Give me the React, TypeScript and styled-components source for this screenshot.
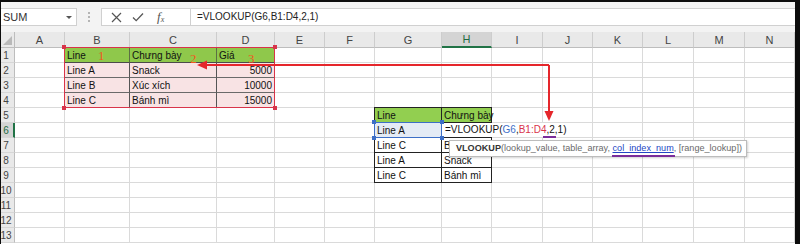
import React from 'react'
import styled, { createGlobalStyle, css } from 'styled-components'

type Kind = 'plain' | 'green1' | 'pink' | 'green2' | 'box2' | 'ref' | 'edit'

type CellDef = {
  text?: string
  kind: Kind
  right?: boolean
  mark?: { n: string; left: number; top: number }
}

const COLS = [
  { id: '', w: 14 },
  { id: 'A', w: 50 },
  { id: 'B', w: 65 },
  { id: 'C', w: 87 },
  { id: 'D', w: 58 },
  { id: 'E', w: 50 },
  { id: 'F', w: 50 },
  { id: 'G', w: 67 },
  { id: 'H', w: 50 },
  { id: 'I', w: 51 },
  { id: 'J', w: 50 },
  { id: 'K', w: 50 },
  { id: 'L', w: 51 },
  { id: 'M', w: 51 },
  { id: 'N', w: 50 },
]
const ROWS = 13
const ACTIVE_COL = 'H'
const ACTIVE_ROW = 6

const CELLS: Record<string, CellDef> = {
  B1: { text: 'Line', kind: 'green1', mark: { n: '1', left: 33, top: 1 } },
  C1: { text: 'Chưng bày', kind: 'green1', mark: { n: '2', left: 60, top: 4 } },
  D1: { text: 'Giá', kind: 'green1', mark: { n: '3', left: 31, top: 4 } },
  B2: { text: 'Line A', kind: 'pink' },
  C2: { text: 'Snack', kind: 'pink' },
  D2: { text: '5000', kind: 'pink', right: true },
  B3: { text: 'Line B', kind: 'pink' },
  C3: { text: 'Xúc xích', kind: 'pink' },
  D3: { text: '10000', kind: 'pink', right: true },
  B4: { text: 'Line C', kind: 'pink' },
  C4: { text: 'Bánh mì', kind: 'pink' },
  D4: { text: '15000', kind: 'pink', right: true },
  G5: { text: 'Line', kind: 'green2' },
  H5: { text: 'Chưng bày', kind: 'green2' },
  G6: { text: 'Line A', kind: 'ref' },
  H6: { kind: 'edit' },
  G7: { text: 'Line C', kind: 'box2' },
  H7: { text: 'B', kind: 'box2' },
  G8: { text: 'Line A', kind: 'box2' },
  H8: { text: 'Snack', kind: 'box2' },
  G9: { text: 'Line C', kind: 'box2' },
  H9: { text: 'Bánh mì', kind: 'box2' },
}

const GlobalStyle = createGlobalStyle`
  html, body { margin: 0; padding: 0; background: #000; }
  body { font-family: "Liberation Sans", Arial, sans-serif; }
`

const Frame = styled.div`
  width: 800px;
  height: 244px;
  box-sizing: border-box;
  padding: 2px 5px 0 1px;
  background: #0c0c0c;
  overflow: hidden;
  display: flex;
  flex-direction: column;
`

const FormulaBar = styled.div`
  height: 30px;
  flex: none;
  background: #f3f3f3;
  display: flex;
  align-items: center;
`

const NameBox = styled.div`
  width: 76px;
  height: 18px;
  box-sizing: border-box;
  background: #fff;
  border: 1px solid #d0d0d0;
  border-left: none;
  display: flex;
  align-items: center;
  justify-content: space-between;
  padding: 0 4px 0 2px;
  font-size: 11px;
  color: #333;
`

const Caret = styled.span`
  width: 0;
  height: 0;
  border-left: 3px solid transparent;
  border-right: 3px solid transparent;
  border-top: 3px solid #555;
`

const Grip = styled.div`
  width: 24px;
  display: flex;
  flex-direction: column;
  align-items: center;
  gap: 2px;
  & > i {
    width: 2px;
    height: 2px;
    background: #b5b5b5;
  }
`

const Tools = styled.div`
  width: 89px;
  height: 18px;
  box-sizing: border-box;
  background: #fff;
  border: 1px solid #d0d0d0;
  border-right: none;
  display: flex;
  align-items: center;
  padding-left: 9px;
  gap: 10px;
`

const Fx = styled.span`
  font-family: "Liberation Serif", serif;
  font-style: italic;
  font-size: 13px;
  color: #555;
  margin-left: 3px;
  & > sub {
    font-size: 8px;
    vertical-align: -1px;
  }
`

const Input = styled.div`
  flex: 1;
  height: 18px;
  box-sizing: border-box;
  background: #fff;
  border: 1px solid #d0d0d0;
  border-right: none;
  padding-left: 6px;
  font-size: 10px;
  line-height: 16px;
  color: #222;
`

const SheetWrap = styled.div`
  position: relative;
  flex: 1;
  background: #fff;
`

const Sheet = styled.div`
  display: grid;
  grid-template-columns: ${COLS.map((c) => c.w + 'px').join(' ')};
  grid-template-rows: 16px repeat(${ROWS}, 15px);
`

const headBase = css`
  box-sizing: border-box;
  background: #e9e9e9;
  color: #444;
  font-size: 11px;
  display: flex;
  align-items: center;
  justify-content: center;
  overflow: hidden;
`

const ColHead = styled.div<{ $active?: boolean }>`
  ${headBase}
  border-right: 1px solid #cdcdcd;
  border-bottom: 1px solid #bdbdbd;
  ${(p) =>
    p.$active &&
    css`
      background: #d4d4d4;
      color: #1f6b42;
      border-bottom: 2px solid #217346;
    `}
`

const Corner = styled.div`
  ${headBase}
  position: relative;
  border-right: 1px solid #bdbdbd;
  border-bottom: 1px solid #bdbdbd;
  &::after {
    content: '';
    position: absolute;
    right: 2px;
    bottom: 2px;
    border-left: 9px solid transparent;
    border-bottom: 9px solid #b9b9b9;
  }
`

const RowHead = styled.div<{ $active?: boolean }>`
  ${headBase}
  justify-content: flex-start;
  border-right: 1px solid #bdbdbd;
  border-bottom: 1px solid #d6d6d6;
  font-size: 10px;
  & > span {
    flex: none;
    width: 22px;
    margin-left: -6px;
    text-align: center;
  }
  ${(p) =>
    p.$active &&
    css`
      background: #d4d4d4;
      color: #1f6b42;
      border-right: 2px solid #217346;
    `}
`

const kinds: Record<Kind, ReturnType<typeof css>> = {
  plain: css``,
  green1: css`
    background: #8fc84b;
    border-right-color: #5c6f44;
    border-bottom-color: #4b4b4b;
  `,
  pink: css`
    background: #f8e3e4;
    border-right-color: #555;
    border-bottom-color: #6a6a6a;
  `,
  green2: css`
    background: #92cf50;
    border-right-color: #222;
    border-bottom-color: #222;
  `,
  box2: css`
    border-right-color: #222;
    border-bottom-color: #222;
  `,
  ref: css`
    background: #e4ebf5;
    border-right-color: #222;
    border-bottom-color: #222;
  `,
  edit: css`
    z-index: 2;
    border-right-color: #222;
    border-bottom-color: #222;
  `,
}

const Cell = styled.div<{ $kind: Kind; $right?: boolean; $edgeL?: boolean; $edgeT?: boolean }>`
  position: relative;
  box-sizing: border-box;
  border-right: 1px solid #dadada;
  border-bottom: 1px solid #dadada;
  padding: 0 2px;
  font-size: 10px;
  line-height: 15px;
  color: #111;
  white-space: nowrap;
  text-align: ${(p) => (p.$right ? 'right' : 'left')};
  ${(p) => kinds[p.$kind]}
  box-shadow: ${(p) =>
    [p.$edgeL && '-1px 0 0 #222', p.$edgeT && '0 -1px 0 #222', p.$edgeL && p.$edgeT && '-1px -1px 0 #222']
      .filter(Boolean)
      .join(', ') || 'none'};
`

const Mark = styled.span<{ $left: number; $top: number }>`
  position: absolute;
  z-index: 4;
  left: ${(p) => p.$left}px;
  top: ${(p) => p.$top}px;
  font-family: "Liberation Serif", serif;
  font-size: 13px;
  line-height: 13px;
  color: #f0581f;
`

const EditText = styled.span`
  position: absolute;
  left: 1px;
  top: 0;
  background: #fff;
  padding: 0 3px 0 2px;
  font-size: 10px;
  line-height: 14px;
  color: #111;
`

const RefG = styled.span`
  color: #3f6fc8;
`
const RefB = styled.span`
  color: #d9344b;
`

const RangeBox = styled.div<{ $color: string }>`
  position: relative;
  z-index: 3;
  margin: -1px 0 0 -1px;
  border: 1px solid ${(p) => p.$color};
  pointer-events: none;
  & > i {
    position: absolute;
    width: 4px;
    height: 4px;
    background: ${(p) => p.$color};
  }
  & > i:nth-child(1) { left: -3px; top: -3px; }
  & > i:nth-child(2) { right: -3px; top: -3px; }
  & > i:nth-child(3) { left: -3px; bottom: -3px; }
  & > i:nth-child(4) { right: -3px; bottom: -3px; }
`

const Tip = styled.div`
  position: absolute;
  left: 448px;
  top: 108px;
  z-index: 5;
  height: 17px;
  box-sizing: border-box;
  padding: 0 4px 0 6px;
  background: #fff;
  border: 1px solid #bcbcbc;
  box-shadow: 1px 1px 2px rgba(0, 0, 0, 0.18);
  font-size: 9.1px;
  line-height: 15px;
  color: #6a6a6a;
  white-space: nowrap;
  & > b {
    color: #333;
  }
  & > u {
    color: #2346c4;
  }
`

const Overlay = styled.svg`
  position: absolute;
  left: 0;
  top: 0;
  z-index: 6;
  pointer-events: none;
`

function Handles() {
  return (
    <>
      <i />
      <i />
      <i />
      <i />
    </>
  )
}

export default function App() {
  const items: React.ReactNode[] = []
  COLS.forEach((c, ci) => {
    const pos = { gridColumn: ci + 1, gridRow: 1 }
    items.push(
      ci === 0 ? (
        <Corner key={'h' + ci} style={pos} />
      ) : (
        <ColHead key={'h' + ci} style={pos} $active={c.id === ACTIVE_COL}>
          {c.id}
        </ColHead>
      )
    )
  })
  for (let r = 1; r <= ROWS; r++) {
    COLS.forEach((c, ci) => {
      const pos = { gridColumn: ci + 1, gridRow: r + 1 }
      if (ci === 0) {
        items.push(
          <RowHead key={r + '-0'} style={pos} $active={r === ACTIVE_ROW}>
            <span>{r}</span>
          </RowHead>
        )
        return
      }
      const def = CELLS[c.id + r] ?? { kind: 'plain' as Kind }
      const inT2 = c.id === 'G' || c.id === 'H'
      const t2 = inT2 && r >= 5 && r <= 9
      items.push(
        <Cell
          key={r + '-' + ci}
          style={pos}
          $kind={def.kind}
          $right={def.right}
          $edgeL={t2 && c.id === 'G'}
          $edgeT={t2 && r === 5}
        >
          {def.text}
          {def.mark && (
            <Mark $left={def.mark.left} $top={def.mark.top}>
              {def.mark.n}
            </Mark>
          )}
          {def.kind === 'edit' && (
            <EditText>
              =VLOOKUP(<RefG>G6</RefG>,<RefB>B1:D4</RefB>,2,1)
            </EditText>
          )}
        </Cell>
      )
    })
  }

  return (
    <>
      <GlobalStyle />
      <Frame>
        <FormulaBar>
          <NameBox>
            SUM
            <Caret />
          </NameBox>
          <Grip>
            <i />
            <i />
            <i />
          </Grip>
          <Tools>
            <svg width="11" height="11" viewBox="0 0 11 11">
              <path d="M1 1 L10 10 M10 1 L1 10" stroke="#555" strokeWidth="1.2" fill="none" />
            </svg>
            <svg width="12" height="10" viewBox="0 0 12 10">
              <path d="M1 5.5 L4.2 8.6 L11 1.5" stroke="#555" strokeWidth="1.3" fill="none" />
            </svg>
            <Fx>
              f<sub>x</sub>
            </Fx>
          </Tools>
          <Input>=VLOOKUP(G6,B1:D4,2,1)</Input>
        </FormulaBar>
        <SheetWrap>
          <Sheet>
            {items}
            <RangeBox $color="#d8344a" style={{ gridColumn: '3 / 6', gridRow: '2 / 6' }}>
              <Handles />
            </RangeBox>
            <RangeBox $color="#3d6fc6" style={{ gridColumn: '8 / 9', gridRow: '7 / 8' }}>
              <Handles />
            </RangeBox>
          </Sheet>
          <Tip>
            <b>VLOOKUP</b>(lookup_value, table_array, <u>col_index_num</u>, [range_lookup])
          </Tip>
          <Overlay width="794" height="212" viewBox="0 0 794 212">
            <g stroke="#e5262b" strokeWidth="2" fill="none">
              <path d="M548 33 H204" />
              <path d="M548 33 V80" />
            </g>
            <g fill="#e5262b">
              <path d="M196 33 L206 28.5 L206 37.5 Z" />
              <path d="M548 89 L543.5 79 L552.5 79 Z" />
            </g>
            <g stroke="#7a2d9a" strokeWidth="2">
              <path d="M542 105 H555" />
              <path d="M611 124 H674" />
            </g>
          </Overlay>
        </SheetWrap>
      </Frame>
    </>
  )
}
